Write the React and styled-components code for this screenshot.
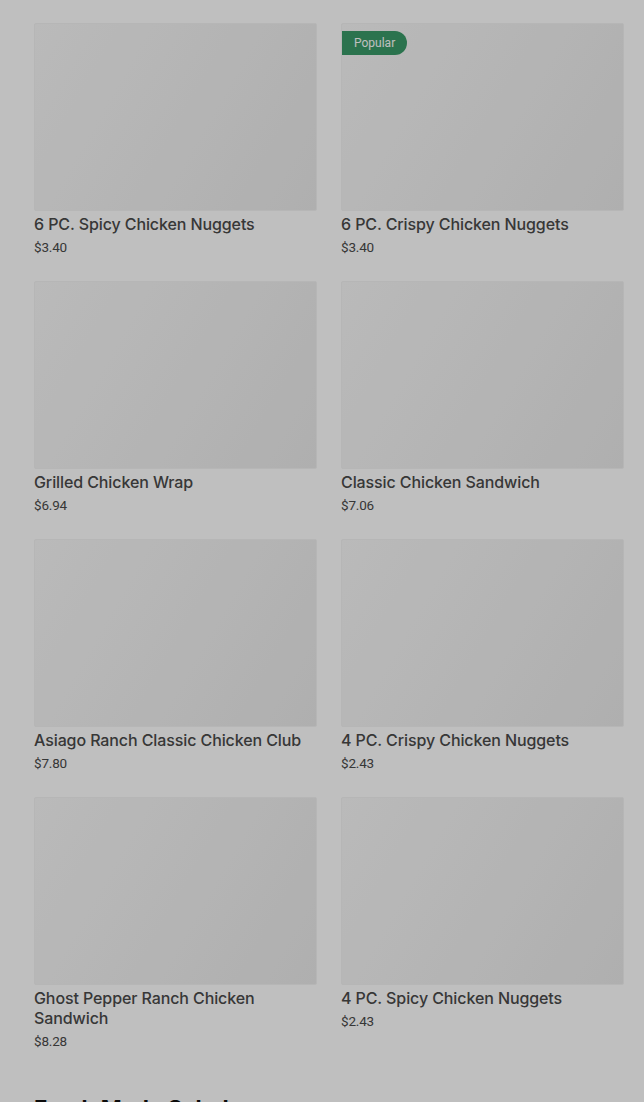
import React from "react";
import styled, { createGlobalStyle } from "styled-components";

const Global = createGlobalStyle`
  html, body { margin: 0; padding: 0; background: #ffffff; }
  body { font-family: Roboto, Inter, "Noto Sans", sans-serif; color: #222; }
  * { box-sizing: border-box; }
`;

const Page = styled.main`
  padding: 23px 20px 40px 34px;
`;

const Grid = styled.div`
  display: grid;
  grid-template-columns: 1fr 1fr;
  column-gap: 24px;
  row-gap: 24px;
`;

const Card = styled.article`
  display: flex;
  flex-direction: column;
`;

const Thumb = styled.div`
  position: relative;
  height: 188px;
  border-radius: 2px;
  border: 1px solid #f3f3f3;
  background: linear-gradient(120deg, #f8f8f8 0%, #f2f2f2 45%, #eaeaea 100%);
`;

const Badge = styled.span`
  position: absolute;
  top: 7px;
  left: 0;
  height: 24px;
  padding: 0 12px;
  display: inline-flex;
  align-items: center;
  font-size: 12px;
  color: #ffffff;
  background: #3a9a68;
  border-radius: 0 12px 12px 0;
`;

const Name = styled.h3`
  margin: 3px 0 0;
  font-family: Inter, Roboto, sans-serif;
  font-size: 16px;
  line-height: 20px;
  font-weight: 500;
  color: #4a4a4a;
  letter-spacing: -0.1px;
`;

const Price = styled.span`
  margin-top: 3px;
  font-size: 13.5px;
  line-height: 20px;
  color: #4a4a4a;
  letter-spacing: -0.2px;
`;

const Section = styled.h2`
  margin: 43px 0 0;
  font-family: Inter, Roboto, sans-serif;
  font-size: 22.5px;
  line-height: 30px;
  font-weight: 700;
  color: #111111;
`;

const Overlay = styled.div`
  position: fixed;
  inset: 0;
  background: rgba(0, 0, 0, 0.25);
  pointer-events: none;
`;

const items = [
  { name: "6 PC. Spicy Chicken Nuggets", price: "$3.40" },
  { name: "6 PC. Crispy Chicken Nuggets", price: "$3.40", popular: true },
  { name: "Grilled Chicken Wrap", price: "$6.94" },
  { name: "Classic Chicken Sandwich", price: "$7.06" },
  { name: "Asiago Ranch Classic Chicken Club", price: "$7.80" },
  { name: "4 PC. Crispy Chicken Nuggets", price: "$2.43" },
  { name: "Ghost Pepper Ranch Chicken Sandwich", price: "$8.28" },
  { name: "4 PC. Spicy Chicken Nuggets", price: "$2.43" },
];

export default function App() {
  return (
    <>
      <Global />
      <Page>
        <Grid>
          {items.map((it) => (
            <Card key={it.name}>
              <Thumb>{it.popular && <Badge>Popular</Badge>}</Thumb>
              <Name>{it.name}</Name>
              <Price>{it.price}</Price>
            </Card>
          ))}
        </Grid>
        <Section>Fresh Made Salads</Section>
      </Page>
      <Overlay />
    </>
  );
}
